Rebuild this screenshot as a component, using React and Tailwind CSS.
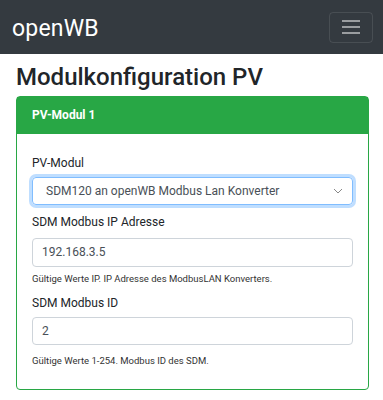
import React from "react";

export default function App() {
  return (
    <div className="min-h-[400px] bg-white text-[#212529]" style={{ fontFamily: "Roboto, 'Liberation Sans', sans-serif" }}>
      <nav className="h-[54px] bg-[#343a40] flex items-center justify-between pl-3 pr-[10px]">
        <span className="text-[23px] leading-none tracking-[0.2px] text-white pt-[2px]">openWB</span>
        <button className="w-[44px] h-[31px] rounded border border-white/10 flex flex-col items-center justify-center gap-[4px]">
          <span className="block w-[18px] h-[2px] bg-white/50" />
          <span className="block w-[18px] h-[2px] bg-white/50" />
          <span className="block w-[18px] h-[2px] bg-white/50" />
        </button>
      </nav>
      <div className="pl-4 pr-[14px]">
        <h1 className="mt-[9px] mb-1 text-[24px] leading-[1.2] font-medium">Modulkonfiguration PV</h1>
        <div className="rounded border border-[#28a745]">
          <div className="h-[37px] bg-[#28a745] flex items-center px-[15px] text-white text-[12px] font-bold">PV-Modul 1</div>
          <div className="px-[15px] pt-5 pb-[13px]">
            <div className="mb-2">
              <label className="block text-[12px] leading-[19px] mb-1">PV-Modul</label>
              <div className="relative h-[28px] rounded border border-[#80bdff] shadow-[0_0_0_3px_rgba(0,123,255,0.25)] flex items-center pl-[13px] text-[12px] text-[#495057]">
                SDM120 an openWB Modbus Lan Konverter
                <svg className="absolute right-[9px] top-[10px]" width="10" height="6" viewBox="0 0 10 6" fill="none">
                  <path d="M1 1l4 4 4-4" stroke="#888" strokeWidth="1" />
                </svg>
              </div>
            </div>
            <div className="mb-2">
              <label className="block text-[12px] leading-[19px] mb-[6px]">SDM Modbus IP Adresse</label>
              <div className="h-[29px] rounded border border-[#ced4da] flex items-center pl-[9px] text-[12px] text-[#495057]">192.168.3.5</div>
              <p className="text-[9.5px] leading-[15px] mt-[4px] text-[#333]">Gültige Werte IP. IP Adresse des ModbusLAN Konverters.</p>
            </div>
            <div className="mb-2">
              <label className="block text-[12px] leading-[19px] mb-[4px]">SDM Modbus ID</label>
              <div className="h-[28px] rounded border border-[#ced4da] flex items-center pl-[9px] text-[12px] text-[#495057]">2</div>
              <p className="text-[9.5px] leading-[15px] mt-[8px] text-[#333]">Gültige Werte 1-254. Modbus ID des SDM.</p>
            </div>
          </div>
        </div>
      </div>
    </div>
  );
}
